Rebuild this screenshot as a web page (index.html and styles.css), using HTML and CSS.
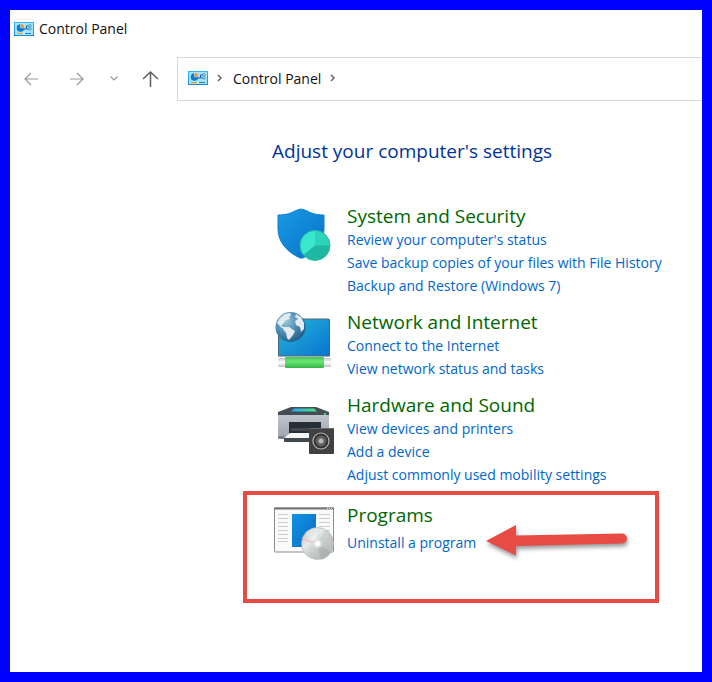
FILE: index.html
```html
<!DOCTYPE html>
<html lang="en">
<head>
<meta charset="utf-8">
<title>Control Panel</title>
<link rel="stylesheet" href="styles.css">
</head>
<body>
<svg class="defs" width="0" height="0" aria-hidden="true">
  <defs>
    <linearGradient id="cp-border" x1="0" y1="0" x2="0" y2="1"><stop offset="0" stop-color="#35b8ee"/><stop offset="1" stop-color="#1688d8"/></linearGradient>
    <symbol id="cp-icon" viewBox="0 0 20 14">
      <rect width="20" height="14" fill="url(#cp-border)"/>
      <rect x="1" y="1" width="18" height="12" fill="#a5e3fa"/>
      <circle cx="6.500" cy="6" r="3.800" fill="#1478cd"/>
      <path d="M6.500 5.800V1.500a4 4 0 0 1 4 4.300z" fill="#f99416" stroke="#d7f4ff" stroke-width=".5"/>
      <path d="M10 7h2.500V4H15M15 7h-2" fill="none" stroke="#155fa6"/>
      <circle cx="16" cy="3.700" r="1.300" fill="none" stroke="#438fc5" stroke-width=".8"/>
      <circle cx="16" cy="6.800" r="1.300" fill="none" stroke="#438fc5" stroke-width=".8"/>
      <path d="M3 11.500h6" stroke="#f7921e"/><path d="M9 11.500h2" stroke="#fff"/><path d="M11 11.500h6" stroke="#1685d6"/>
    </symbol>
  </defs>
</svg>
<div class="window">
  <header class="titlebar">
    <svg class="app-icon" aria-hidden="true"><use href="#cp-icon"/></svg>
    <span>Control Panel</span>
  </header>
  <nav class="toolbar" aria-label="Navigation">
    <div class="nav-buttons">
      <button class="nav-button" type="button" aria-label="Back"><svg width="16" height="16" viewBox="0 0 16 16"><path d="M15 8H2M8 2L2 8l6 6"/></svg></button>
      <button class="nav-button" type="button" aria-label="Forward"><svg width="16" height="16" viewBox="0 0 16 16"><path d="M1 8h13M8 2l6 6-6 6"/></svg></button>
      <button class="nav-button nav-recent" type="button" aria-label="Recent locations"><svg width="10" height="16" viewBox="0 0 10 16"><path d="M1.500 5.500L5 9l3.500-3.500"/></svg></button>
      <button class="nav-button nav-up" type="button" aria-label="Up"><svg width="18" height="18" viewBox="0 0 18 18"><path d="M9.500 17V2M2 9l7.500-7L17 9"/></svg></button>
    </div>
    <div class="address">
      <svg class="app-icon" aria-hidden="true"><use href="#cp-icon"/></svg>
      <svg class="chevron" width="6" height="10" viewBox="0 0 6 10" aria-hidden="true"><path d="M1 2l3 3-3 3"/></svg>
      <a class="crumb" href="#">Control Panel</a>
      <svg class="chevron" width="6" height="10" viewBox="0 0 6 10" aria-hidden="true"><path d="M1 2l3 3-3 3"/></svg>
    </div>
  </nav>
  <main class="content">
    <h1 class="heading">Adjust your computer's settings</h1>

    <section class="category">
      <svg class="category-icon" viewBox="0 0 64 64" aria-hidden="true">
        <defs>
          <linearGradient id="shield" x1="0" y1="0" x2="1" y2="1"><stop stop-color="#199be3"/><stop offset="1" stop-color="#0870c9"/></linearGradient>
          <clipPath id="pie"><circle cx="44" cy="41.500" r="15"/></clipPath>
        </defs>
        <path d="M7 11C16 11 20 9 25 6.500q5-3 10 0c5 2.500 9 4.500 18 4.500v14c0 14-9 23-21 29h-3C16 48 7 38 7 25z" fill="url(#shield)" stroke="#0d80cf"/>
        <g clip-path="url(#pie)"><path d="M28 26h32v32H28z" fill="#20b7a2"/><path d="M44 26v15.500L30 53h-2V26z" fill="#3be6ce"/><path d="M44 26h16v15.500H44z" fill="#2ed3b8"/></g>
        <circle cx="44" cy="41.500" r="15" fill="none" stroke="#24bba5"/>
      </svg>
      <div class="category-body">
        <h2><a href="#">System and Security</a></h2>
        <ul>
          <li><a href="#">Review your computer's status</a></li>
          <li><a href="#">Save backup copies of your files with File History</a></li>
          <li><a href="#">Backup and Restore (Windows 7)</a></li>
        </ul>
      </div>
    </section>

    <section class="category">
      <svg class="category-icon" viewBox="0 0 64 64" aria-hidden="true">
        <defs>
          <linearGradient id="screen" x1="0" y1="0" x2="1" y2="1"><stop stop-color="#27b7dc"/><stop offset="1" stop-color="#0873ce"/></linearGradient>
          <radialGradient id="globe" cx=".35" cy=".3" r=".8"><stop stop-color="#9fc6dc"/><stop offset=".5" stop-color="#4a8ab3"/><stop offset="1" stop-color="#1c557f"/></radialGradient>
          <linearGradient id="cable" x1="0" y1="0" x2="0" y2="1"><stop stop-color="#4dbd5b"/><stop offset=".4" stop-color="#68e673"/><stop offset="1" stop-color="#35b54a"/></linearGradient>
          <linearGradient id="plug" x1="0" y1="0" x2="0" y2="1"><stop stop-color="#c5c8ca"/><stop offset=".5" stop-color="#fff"/><stop offset="1" stop-color="#bfc2c4"/></linearGradient>
        </defs>
        <rect x="7.500" y="9" width="51" height="37" rx="1" fill="url(#screen)" stroke="#4f6571"/>
        <path d="M7 46.500h52" stroke="#9eadb6"/>
        <rect x="7" y="48" width="53" height="9" rx="1" fill="url(#plug)"/>
        <rect x="14" y="47" width="39" height="11" rx="1" fill="url(#cable)"/>
        <circle cx="19.500" cy="17" r="15" fill="url(#globe)"/>
        <path d="M9 8l5-4 5-1 1 2-2 2 1 2-4 1-3 4-2 2 3 1 1 2-3-1-3-3-2-2zM13 17l5 0 6 4-2 4-4 5-2-2-1-5-3-4zM25 4l5 3 3 6 0 6-3 3-1-5-4-2-1-4 3-2-3-2z" fill="#e2ebef"/>
      </svg>
      <div class="category-body">
        <h2><a href="#">Network and Internet</a></h2>
        <ul>
          <li><a href="#">Connect to the Internet</a></li>
          <li><a href="#">View network status and tasks</a></li>
        </ul>
      </div>
    </section>

    <section class="category">
      <svg class="category-icon" viewBox="0 0 64 64" aria-hidden="true">
        <defs>
          <linearGradient id="panel"><stop stop-color="#28a5f4"/><stop offset="1" stop-color="#4be680"/></linearGradient>
          <linearGradient id="printer" x1="0" y1="0" x2="0" y2="1"><stop stop-color="#c0c5cb"/><stop offset="1" stop-color="#9ba3ad"/></linearGradient>
        </defs>
        <path d="M20 14h25l13 5v5H7v-5z" fill="#454c55"/>
        <path d="M23 15.500h20l3 3H20z" fill="url(#panel)"/>
        <path d="M7 22h51v22q0 2-2 2H9q-2 0-2-2z" fill="url(#printer)"/>
        <path d="M7 43h51v2q0 1-2 1H9q-2 0-2-1z" fill="#777f89"/>
        <path d="M53 21h2" stroke="#3cdf52" stroke-width="2"/>
        <path d="M18 29h32v12H18z" fill="#272e34"/><path d="M20 35h28v3H20z" fill="#41494f"/>
        <path d="M19 40h25v5H13z" fill="#f4f5f6"/><path d="M13 45h26v4H14q-1 0-1-1z" fill="#414950"/>
        <rect x="38" y="35" width="25" height="26" rx="1" fill="#414141"/>
        <path d="M39 35.500h23" stroke="#686868"/>
        <circle cx="50" cy="48" r="8" fill="#313131" stroke="#b3b3b3" stroke-width="1.200"/>
        <circle cx="50" cy="48" r="5.500" fill="#606060"/><circle cx="50" cy="48" r="2.500" fill="#b8b8b8"/>
      </svg>
      <div class="category-body">
        <h2><a href="#">Hardware and Sound</a></h2>
        <ul>
          <li><a href="#">View devices and printers</a></li>
          <li><a href="#">Add a device</a></li>
          <li><a href="#">Adjust commonly used mobility settings</a></li>
        </ul>
      </div>
    </section>

    <section class="category highlighted">
      <svg class="category-icon" viewBox="0 0 64 64" aria-hidden="true">
        <defs>
          <linearGradient id="page" x1="0" y1="0" x2="1" y2="1"><stop stop-color="#1292e5"/><stop offset="1" stop-color="#096cc0"/></linearGradient>
          <linearGradient id="disc" x1="0" y1="0" x2="1" y2="1"><stop stop-color="#bfc3c3"/><stop offset=".35" stop-color="#e7e9e8"/><stop offset=".55" stop-color="#c9cccb"/><stop offset="1" stop-color="#adb1b1"/></linearGradient>
        </defs>
        <rect x="3.500" y="5" width="59" height="44" rx="1" fill="#fafafa" stroke="#8c8c8c"/>
        <path d="M3 5.500h60" stroke="#747474" stroke-width="2"/><path d="M56 5.500h1m1 0h1m1 0h1" stroke="#e6e6e6"/>
        <path d="M7 11.500h10M7 15.500h10M7 19.500h10M7 23.500h10M7 27.500h10M7 31.500h10M7 35.500h10M7 38.500h10M48 11.500h11M48 15.500h11M48 19.500h11M48 23.500h11M48 27.500h11" stroke="#cecece"/>
        <path d="M21 11h24v33H21z" fill="url(#page)"/>
        <circle cx="46.500" cy="40.500" r="16" fill="url(#disc)" stroke="#b2b5b5" stroke-width=".7"/>
        <path d="M46 41L34 30q5-5 12-5z" fill="#fff" opacity=".3"/><path d="M46 41l14 8q-4 7-10 8z" fill="#878c8b" opacity=".25"/>
        <path d="M46 41l10-13" stroke="#8bdf9a" opacity=".7"/><path d="M46 41l-15-5" stroke="#ef9ba8" opacity=".7"/>
        <circle cx="46.500" cy="40.500" r="4.500" fill="#dfe1e1"/><circle cx="46.500" cy="40.500" r="2.500" fill="#fff"/>
      </svg>
      <div class="category-body">
        <h2><a href="#">Programs</a></h2>
        <ul>
          <li class="pointed"><a href="#">Uninstall a program</a>
            <svg class="pointer" width="150" height="40" viewBox="0 0 150 40" aria-hidden="true"><path d="M4 20L34 4v10.500L140 12.500a5 5 0 0 1 0 10L34 25v9.500z"/></svg>
          </li>
        </ul>
      </div>
    </section>
  </main>
</div>
</body>
</html>
```
FILE: styles.css
```css
* { box-sizing: border-box; }

body {
  margin: 0;
  background: #fff;
  color: #111;
  font-family: "Segoe UI", "Open Sans", "Noto Sans", sans-serif;
  font-size: 14px;
}

a { color: inherit; text-decoration: none; }
a:hover { text-decoration: underline; }

h1, h2, ul { margin: 0; padding: 0; font-weight: 400; }
ul { list-style: none; }

.defs { position: absolute; }

.window {
  min-height: 100vh;
  border: 10px solid #00f;
}

.titlebar {
  display: flex;
  align-items: center;
  gap: 5px;
  height: 37px;
  padding-left: 4px;
}

.app-icon { flex: none; width: 20px; height: 14px; }

.toolbar {
  display: flex;
  align-items: center;
  margin-top: 10px;
}

.nav-buttons {
  display: flex;
  flex: none;
  align-items: center;
  width: 167px;
  padding-left: 13px;
}

.nav-button {
  display: flex;
  padding: 0;
  border: 0;
  background: none;
  margin-right: 30px;
}

.nav-button svg, .chevron { fill: none; stroke: #999; stroke-width: 1.2; }
.nav-button.nav-recent { margin: 0 22px 0 -6px; }
.nav-button.nav-up { margin: 0; }
.nav-button.nav-up svg { stroke: #606060; stroke-width: 1.5; }

.address {
  display: flex;
  flex: 1;
  align-items: center;
  height: 44px;
  padding: 0 0 2px 10px;
  border: 1px solid #d9d9d9;
  border-right: 0;
}

.chevron { margin: 0 10px 0 9px; }
.address .chevron { stroke: #666; stroke-width: 1.5; }

.content { padding: 36px 43px 24px 233px; }

.heading {
  margin-bottom: 39px;
  padding-left: 29px;
  color: #003399;
  font-size: 19px;
  line-height: 28px;
}

.category {
  display: flex;
  gap: 12px;
  margin-bottom: 13px;
  padding-left: 28px;
}

.category-icon { flex: none; width: 64px; height: 64px; }

.category h2 {
  color: #006600;
  font-size: 19px;
  line-height: 24px;
}

.category li {
  color: #0066cc;
  line-height: 23px;
  white-space: nowrap;
}

.highlighted {
  min-height: 112px;
  margin-top: -8px;
  margin-bottom: 0;
  padding: 8px 0 0 24px;
  border: 4px solid #e84a44;
}

.highlighted h2 { margin-bottom: 4px; }

.pointed { position: relative; width: max-content; }

.pointer {
  position: absolute;
  top: -10px;
  left: 100%;
  margin-left: 6px;
  fill: #e84a44;
  filter: drop-shadow(1px 3px 2px rgba(0, 0, 0, .4));
}
```
